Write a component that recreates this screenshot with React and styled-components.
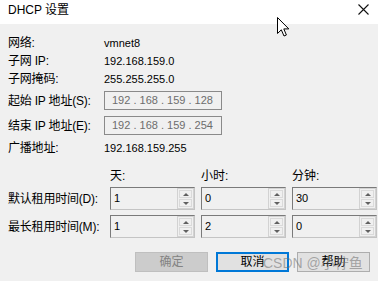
import { Fragment } from "react";
import styled, { createGlobalStyle } from "styled-components";

const GlobalStyle = createGlobalStyle`
	html, body {
		margin: 0;
		padding: 0;
		background: #f0f0f0;
	}
	* {
		box-sizing: border-box;
	}
`;

const FONT = `"Liberation Sans", "Noto Sans CJK SC", sans-serif`;

const info = [
	{ label: "网络:", value: "vmnet8" },
	{ label: "子网 IP:", value: "192.168.159.0" },
	{ label: "子网掩码:", value: "255.255.255.0" },
	{ label: "起始 IP 地址(S):", ip: "192 . 168 . 159 . 128" },
	{ label: "结束 IP 地址(E):", ip: "192 . 168 . 159 . 254" },
	{ label: "广播地址:", value: "192.168.159.255" },
];

const leases = [
	{ label: "默认租用时间(D):", values: ["1", "0", "30"] },
	{ label: "最长租用时间(M):", values: ["1", "2", "0"] },
];

function SpinBox({ value }) {
	return (
		<Spin>
			<SpinValue>{value}</SpinValue>
			<SpinCol>
				<SpinBtn>
					<Arrow $up />
				</SpinBtn>
				<SpinBtn>
					<Arrow />
				</SpinBtn>
			</SpinCol>
		</Spin>
	);
}

export default function App() {
	return (
		<>
			<GlobalStyle />
			<Window>
				<TitleBar>
					<Title>DHCP 设置</Title>
					<svg width="11" height="11" viewBox="0 0 11 11">
						<path d="M0.5 0.5 L10.5 10.5 M10.5 0.5 L0.5 10.5" stroke="#111" strokeWidth="1.1" />
					</svg>
				</TitleBar>
				<Content>
					<InfoGrid>
						{info.map((row) => (
							<Fragment key={row.label}>
								<Label>{row.label}</Label>
								{row.ip ? <IpBox>{row.ip}</IpBox> : <Value>{row.value}</Value>}
							</Fragment>
						))}
					</InfoGrid>
					<LeaseGrid>
						<span />
						<HeadLabel>天:</HeadLabel>
						<HeadLabel>小时:</HeadLabel>
						<HeadLabel>分钟:</HeadLabel>
						{leases.map((row) => (
							<Fragment key={row.label}>
								<Label>{row.label}</Label>
								{row.values.map((v, i) => (
									<SpinBox key={i} value={v} />
								))}
							</Fragment>
						))}
					</LeaseGrid>
					<ButtonRow>
						<Button $variant="disabled">确定</Button>
						<Button $variant="default">取消</Button>
						<Button>帮助</Button>
					</ButtonRow>
				</Content>
				<Watermark>CSDN @小柠鱼</Watermark>
				<Cursor width="13" height="20" viewBox="0 0 13 20">
					<path
						d="M0.5 0.5 L0.5 16.5 L4.3 12.8 L7 19 L9.4 18 L6.8 11.9 L11.8 11.9 Z"
						fill="#fff"
						stroke="#000"
						strokeWidth="1"
					/>
				</Cursor>
			</Window>
		</>
	);
}

const Window = styled.div`
	position: relative;
	width: 378px;
	height: 281px;
	background: #f0f0f0;
	font-family: ${FONT};
	color: #000;
	overflow: hidden;
`;

const TitleBar = styled.div`
	height: 24px;
	background: #ffffff;
	display: flex;
	align-items: center;
	justify-content: space-between;
	padding: 0 9px 0 8px;
	svg {
		margin-top: -5px;
	}
`;

const Title = styled.div`
	font-size: 12px;
	line-height: 16px;
	margin-top: -4px;
	color: #000;
`;

const Content = styled.div`
	padding: 10px 8px 0 8px;
`;

const InfoGrid = styled.div`
	display: grid;
	grid-template-columns: 96px auto;
	grid-template-rows: 18px 18px 18px 25px 25px 19px;
	align-items: center;
`;

const Label = styled.div`
	font-size: 12px;
	line-height: 18px;
	letter-spacing: -0.2px;
	white-space: nowrap;
`;

const Value = styled.div`
	font-size: 11px;
	line-height: 18px;
`;

const IpBox = styled.div`
	width: 118px;
	height: 19px;
	border: 1px solid #8a8a8a;
	background: #f0f0f0;
	color: #6d6d6d;
	font-size: 11px;
	line-height: 17px;
	padding-left: 7px;
	white-space: pre;
`;

const LeaseGrid = styled.div`
	margin-top: 10px;
	display: grid;
	grid-template-columns: 96px repeat(3, 85px);
	column-gap: 6px;
	grid-template-rows: 15px 23px 23px;
	row-gap: 5px;
	align-items: center;
`;

const HeadLabel = styled.div`
	align-self: start;
	font-size: 12px;
	line-height: 18px;
`;

const Spin = styled.div`
	display: flex;
	align-items: stretch;
	height: 23px;
	border: 1px solid;
	border-color: #7a7a7a #c4c4c4 #c4c4c4 #7a7a7a;
	background: #f0f0f0;
`;

const SpinValue = styled.div`
	flex: 1;
	font-size: 11px;
	line-height: 21px;
	padding-left: 3px;
`;

const SpinCol = styled.div`
	width: 17px;
	display: flex;
	flex-direction: column;
	gap: 1px;
	padding: 1px;
	border: 1px solid #d2d2d2;
`;

const SpinBtn = styled.div`
	flex: 1;
	display: flex;
	align-items: center;
	justify-content: center;
	border: 1px solid #dadada;
	background: #f0f0f0;
`;

const Arrow = styled.div`
	width: 0;
	height: 0;
	border-left: 3px solid transparent;
	border-right: 3px solid transparent;
	${(p) =>
		p.$up
			? "border-bottom: 3px solid #606060;"
			: "border-top: 3px solid #606060;"}
`;

const ButtonRow = styled.div`
	margin-top: 14px;
	display: flex;
	justify-content: flex-end;
	gap: 8px;
`;

const Button = styled.button`
	width: 73px;
	height: 20px;
	font-family: ${FONT};
	font-size: 12px;
	padding: 0;
	line-height: 16px;
	background: ${(p) => (p.$variant === "disabled" ? "#cccccc" : "#e1e1e1")};
	color: ${(p) => (p.$variant === "disabled" ? "#838383" : "#000")};
	border: ${(p) =>
		p.$variant === "default"
			? "2px solid #0078d7"
			: p.$variant === "disabled"
			? "1px solid #bfbfbf"
			: "1px solid #adadad"};
`;

const Watermark = styled.div`
	position: absolute;
	left: 263px;
	top: 254px;
	font-size: 14px;
	line-height: 18px;
	color: rgba(110, 110, 110, 0.55);
	white-space: nowrap;
	pointer-events: none;
`;

const Cursor = styled.svg`
	position: absolute;
	left: 277px;
	top: 17px;
`;
